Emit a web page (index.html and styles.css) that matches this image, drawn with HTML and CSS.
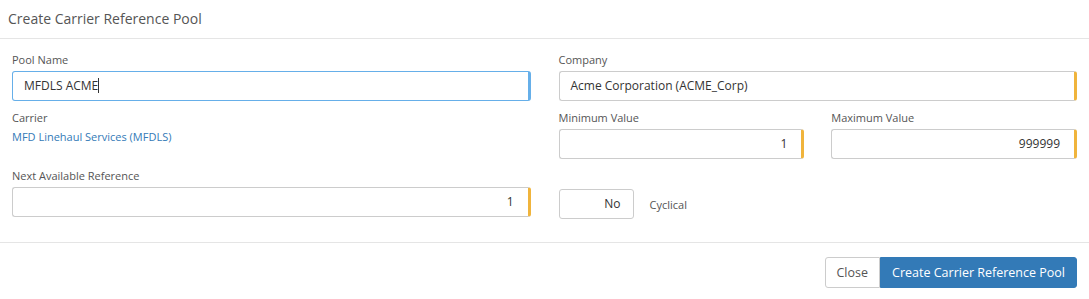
FILE: index.html
```html
<!DOCTYPE html>
<html lang="en">

<head>
    <meta charset="UTF-8">
    <meta name="viewport" content="width=device-width, initial-scale=1.0">
    <title>Create Carrier Reference Pool</title>
    <link rel="stylesheet" href="styles.css">
</head>

<body>
    <div class="modal">
        <div class="modal-header">Create Carrier Reference Pool</div>

        <div class="modal-body">
            <div class="col">
                <div class="field">
                    <label>Pool Name</label>
                    <div class="input focused">MFDLS ACME<span class="caret"></span></div>
                </div>
                <div class="field">
                    <label>Carrier</label>
                    <div class="static">MFD Linehaul Services (MFDLS)</div>
                </div>
                <div class="field">
                    <label>Next Available Reference</label>
                    <div class="input required number">1</div>
                </div>
            </div>

            <div class="col">
                <div class="field">
                    <label>Company</label>
                    <div class="input required">Acme Corporation (ACME_Corp)</div>
                </div>
                <div class="pair">
                    <div class="field">
                        <label>Minimum Value</label>
                        <div class="input required number">1</div>
                    </div>
                    <div class="field">
                        <label>Maximum Value</label>
                        <div class="input required number">999999</div>
                    </div>
                </div>
                <div class="toggle-row">
                    <div class="toggle">No</div>
                    <span class="toggle-label">Cyclical</span>
                </div>
            </div>
        </div>

        <div class="modal-footer">
            <button class="btn">Close</button>
            <button class="btn btn-primary">Create Carrier Reference Pool</button>
        </div>
    </div>
</body>

</html>
```

FILE: styles.css
```css
body {
    font-family: "Open Sans", Arial, sans-serif;
    margin: 0;
    padding: 0;
    background-color: #fff;
    color: #555;
}

.modal {
    width: 1089px;
}

.modal-header {
    height: 39px;
    line-height: 37px;
    padding-left: 8px;
    font-size: 14px;
    color: #555;
    border-bottom: 1px solid #e5e5e5;
    box-sizing: border-box;
}

.modal-body {
    display: grid;
    grid-template-columns: 1fr 1fr;
    column-gap: 28px;
    padding: 14px 12px 23px 12px;
    border-bottom: 1px solid #e5e5e5;
}

.col {
    display: flex;
    flex-direction: column;
}

.field {
    display: flex;
    flex-direction: column;
    margin-bottom: 10px;
}

.col > .field:last-child {
    margin-bottom: 0;
}

.field label {
    font-size: 11px;
    line-height: 14px;
    color: #555;
    margin-bottom: 4px;
}

.input {
    height: 30px;
    box-sizing: border-box;
    border: 1px solid #ccc;
    border-radius: 3px;
    padding: 0 11px;
    font-size: 12px;
    line-height: 28px;
    color: #333;
    background: #fff;
}

.input.required {
    border-right: 3px solid #f0b43c;
}

.input.focused {
    border-color: #66afe9;
    border-right: 3px solid #66afe9;
}

.input.number {
    text-align: right;
    padding-right: 14px;
}

.caret {
    display: inline-block;
    width: 1px;
    height: 15px;
    background: #333;
    vertical-align: -3px;
}

.static {
    font-size: 11px;
    line-height: 14px;
    color: #337ab7;
    margin-top: 1px;
    height: 29px;
}

.pair {
    display: grid;
    grid-template-columns: 1fr 1fr;
    column-gap: 27px;
}

.toggle-row {
    display: flex;
    align-items: center;
    gap: 16px;
    margin-top: 20px;
}

.toggle {
    width: 75px;
    height: 30px;
    box-sizing: border-box;
    border: 1px solid #ccc;
    border-radius: 3px;
    font-size: 12px;
    line-height: 28px;
    text-align: right;
    padding-right: 12px;
    color: #333;
}

.toggle-label {
    font-size: 11px;
    color: #555;
}

.modal-footer {
    display: flex;
    justify-content: flex-end;
    padding: 14px 12px;
}

.btn {
    font-family: "Open Sans", Arial, sans-serif;
    height: 31px;
    font-size: 12.5px;
    padding: 0 11px;
    border: 1px solid #ccc;
    background: #fff;
    color: #555;
    border-radius: 3px 0 0 3px;
    cursor: pointer;
}

.btn-primary {
    background-color: #337ab7;
    border-color: #337ab7;
    color: #fff;
    border-radius: 0 3px 3px 0;
}
```
